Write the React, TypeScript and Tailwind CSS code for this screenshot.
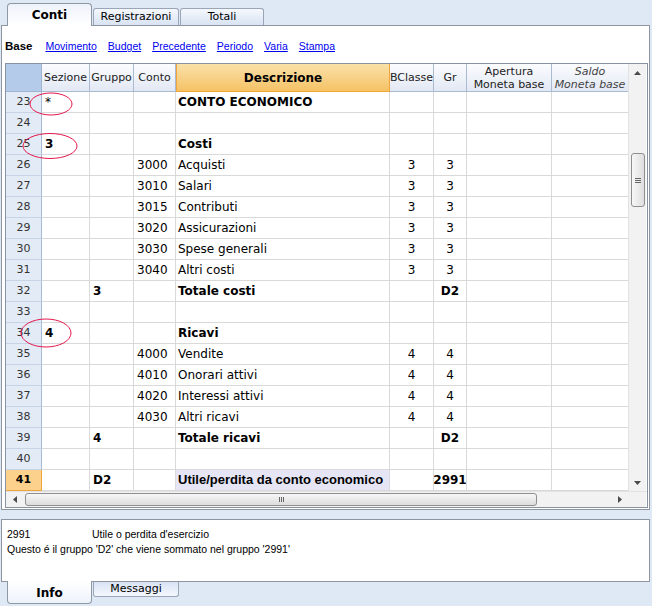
import React from 'react';

type Row = {
  n: number;
  sez?: string;
  grp?: string;
  conto?: string;
  desc?: string;
  bc?: string;
  gr?: string;
  bold?: boolean;
  big?: boolean;
  sel?: boolean;
};

const rows: Row[] = [
  { n: 23, sez: '*', desc: 'CONTO ECONOMICO', big: true },
  { n: 24 },
  { n: 25, sez: '3', desc: 'Costi', bold: true },
  { n: 26, conto: '3000', desc: 'Acquisti', bc: '3', gr: '3' },
  { n: 27, conto: '3010', desc: 'Salari', bc: '3', gr: '3' },
  { n: 28, conto: '3015', desc: 'Contributi', bc: '3', gr: '3' },
  { n: 29, conto: '3020', desc: 'Assicurazioni', bc: '3', gr: '3' },
  { n: 30, conto: '3030', desc: 'Spese generali', bc: '3', gr: '3' },
  { n: 31, conto: '3040', desc: 'Altri costi', bc: '3', gr: '3' },
  { n: 32, grp: '3', desc: 'Totale costi', gr: 'D2', bold: true },
  { n: 33 },
  { n: 34, sez: '4', desc: 'Ricavi', bold: true },
  { n: 35, conto: '4000', desc: 'Vendite', bc: '4', gr: '4' },
  { n: 36, conto: '4010', desc: 'Onorari attivi', bc: '4', gr: '4' },
  { n: 37, conto: '4020', desc: 'Interessi attivi', bc: '4', gr: '4' },
  { n: 38, conto: '4030', desc: 'Altri ricavi', bc: '4', gr: '4' },
  { n: 39, grp: '4', desc: 'Totale ricavi', gr: 'D2', bold: true },
  { n: 40 },
  { n: 41, grp: 'D2', desc: 'Utile/perdita da conto economico', gr: '2991', bold: true, sel: true },
];

const links = ['Movimento', 'Budget', 'Precedente', 'Periodo', 'Varia', 'Stampa'];

const cell = 'h-[21px] shrink-0 border-r border-b border-[#d9d9d9] flex items-center overflow-hidden whitespace-nowrap';

const Arrow = ({ dir }: { dir: 'up' | 'down' | 'left' | 'right' }) => {
  const pts = {
    up: '0,4 7,4 3.5,0',
    down: '0,0 7,0 3.5,4',
    left: '4,0 4,7 0,3.5',
    right: '0,0 0,7 4,3.5',
  }[dir];
  const vertical = dir === 'up' || dir === 'down';
  return (
    <svg width={vertical ? 7 : 4} height={vertical ? 4 : 7} viewBox={vertical ? '0 0 7 4' : '0 0 4 7'}>
      <polygon points={pts} fill="#4a4a4a" />
    </svg>
  );
};

const HeaderCell = ({ w, children, className = '' }: { w: string; children?: React.ReactNode; className?: string }) => (
  <div
    className={`${w} h-[28px] shrink-0 border-r border-b border-[#a9bad1] bg-gradient-to-b from-[#fbfcfe] to-[#e2e8f4] flex flex-col items-center justify-center text-[11px] leading-[13px] text-[#222] ${className}`}
  >
    {children}
  </div>
);

const GridRow = ({ r }: { r: Row }) => {
  const b = r.bold ? 'font-bold' : '';
  return (
    <div className="flex">
      <div
        className={`w-[36px] h-[21px] shrink-0 flex items-center justify-center text-[11px] border-r border-b ${
          r.sel
            ? 'bg-[#fcd18c] border-[#f0a43c] font-bold text-black'
            : 'bg-[#e3ebf6] border-r-[#a7bad3] border-b-[#c7d4e6] text-[#333]'
        }`}
      >
        {r.n}
      </div>
      <div className={`${cell} w-[48px] pl-[3px] ${b}`}>{r.sez}</div>
      <div className={`${cell} w-[44px] pl-[3px] ${b}`}>{r.grp}</div>
      <div className={`${cell} w-[42px] pl-[3px]`}>{r.conto}</div>
      <div
        className={`${cell} w-[214px] pl-[2px] ${b} ${r.big ? 'font-bold' : ''} ${
          r.sel ? 'bg-[#e5e5f5] font-["Liberation_Sans",sans-serif] text-[13px]' : ''
        }`}
      >
        {r.desc}
      </div>
      <div className={`${cell} w-[44px] justify-center`}>{r.bc}</div>
      <div className={`${cell} w-[33px] justify-center ${b}`}>{r.gr}</div>
      <div className={`${cell} w-[85px]`} />
      <div className={`${cell} w-[76px] border-r-0`} />
    </div>
  );
};

export default function App() {
  return (
    <div className="w-[652px] h-[606px] bg-[#dfe8f5] flex flex-col overflow-hidden font-['DejaVu_Sans',sans-serif] text-black">
      {/* top tabs */}
      <div className="h-[25px] shrink-0 flex items-end pl-[7px] gap-[1px] text-[11px]">
        <div className="relative z-10 -mb-[1px] w-[85px] h-[23px] rounded-t-[4px] border border-b-0 border-[#8e97a5] bg-gradient-to-b from-[#eef3fb] to-white flex items-center justify-center font-bold text-[12px]">
          Conti
        </div>
        <div className="w-[86px] h-[17px] rounded-t-[3px] border border-b-0 border-[#9aa6b8] bg-gradient-to-b from-[#f5f8fd] to-[#d8e3f3] flex items-center justify-center">
          Registrazioni
        </div>
        <div className="w-[84px] h-[17px] rounded-t-[3px] border border-b-0 border-[#9aa6b8] bg-gradient-to-b from-[#f5f8fd] to-[#d8e3f3] flex items-center justify-center">
          Totali
        </div>
      </div>

      {/* main panel */}
      <div className="h-[485px] shrink-0 ml-[1px] mr-[2px] border border-[#8e959f] bg-white flex flex-col">
        <div className="h-[37px] shrink-0 flex items-center pl-[3px] pt-[5px] gap-[11px] text-[10.5px] font-['Liberation_Sans',sans-serif]">
          <span className="font-bold mr-[2px] text-[11.5px]">Base</span>
          {links.map((l) => (
            <span key={l} className="text-[#0000ee] underline">
              {l}
            </span>
          ))}
        </div>

        {/* grid */}
        <div className="ml-[3px] mr-[1px] h-[445px] border border-[#8792a2] flex flex-col text-[12px]">
          <div className="flex h-[427px]">
            <div className="w-[622px] flex flex-col">
              <div className="flex">
                <div className="w-[36px] h-[28px] shrink-0 bg-[#b5cbea] border-r border-b border-[#a0b4cf]" />
                <HeaderCell w="w-[48px]">Sezione</HeaderCell>
                <HeaderCell w="w-[44px]">Gruppo</HeaderCell>
                <HeaderCell w="w-[42px]">Conto</HeaderCell>
                <div className="w-[214px] h-[28px] shrink-0 border-x border-b border-[#f0a63a] bg-gradient-to-b from-[#fae1a8] to-[#f5c264] flex items-center justify-center text-[12px] font-bold">
                  Descrizione
                </div>
                <HeaderCell w="w-[44px]">BClasse</HeaderCell>
                <HeaderCell w="w-[33px]">Gr</HeaderCell>
                <HeaderCell w="w-[85px]">
                  <span>Apertura</span>
                  <span>Moneta base</span>
                </HeaderCell>
                <HeaderCell w="w-[76px]" className="italic text-[#444] border-r-0">
                  <span>Saldo</span>
                  <span>Moneta base</span>
                </HeaderCell>
              </div>
              <div className="relative">
                {rows.map((r) => (
                  <GridRow key={r.n} r={r} />
                ))}
                <svg className="absolute left-0 top-0 pointer-events-none" width="120" height="300">
                  <ellipse cx="45" cy="12" rx="21" ry="11" fill="none" stroke="#e4194c" strokeWidth="1" />
                  <ellipse cx="44" cy="54" rx="27" ry="12.5" fill="none" stroke="#e4194c" strokeWidth="1" />
                  <ellipse cx="40" cy="241" rx="25" ry="14" fill="none" stroke="#e4194c" strokeWidth="1" />
                </svg>
              </div>
            </div>
            {/* vertical scrollbar */}
            <div className="w-[18px] bg-[#f2f2f2] border-l border-[#e2e2e2] flex flex-col items-center">
              <div className="h-[17px] flex items-center justify-center">
                <Arrow dir="up" />
              </div>
              <div className="flex-1 w-full relative">
                <div className="absolute left-[2px] right-[1px] top-[72px] h-[54px] rounded-[3px] border border-[#8f8f8f] bg-gradient-to-r from-[#f7f7f7] to-[#dedede] flex flex-col items-center justify-center gap-[1px]">
                  <div className="w-[6px] h-[1px] bg-[#666]" />
                  <div className="w-[6px] h-[1px] bg-[#666]" />
                  <div className="w-[6px] h-[1px] bg-[#666]" />
                </div>
              </div>
              <div className="h-[17px] flex items-center justify-center">
                <Arrow dir="down" />
              </div>
            </div>
          </div>
          {/* horizontal scrollbar */}
          <div className="flex h-[16px] border-t border-[#e2e2e2]">
            <div className="w-[622px] bg-[#f2f2f2] flex items-center">
              <div className="w-[17px] flex justify-center">
                <Arrow dir="left" />
              </div>
              <div className="ml-[2px] w-[512px] h-[13px] rounded-[3px] border border-[#8f8f8f] bg-gradient-to-b from-[#f7f7f7] to-[#dcdcdc] flex items-center justify-center gap-[1px]">
                <div className="w-[1px] h-[5px] bg-[#666]" />
                <div className="w-[1px] h-[5px] bg-[#666]" />
                <div className="w-[1px] h-[5px] bg-[#666]" />
              </div>
              <div className="flex-1 flex justify-end pr-[6px]">
                <Arrow dir="right" />
              </div>
            </div>
            <div className="w-[18px] bg-[#f2f2f2]" />
          </div>
        </div>
      </div>

      <div className="h-[9px] shrink-0" />

      {/* info panel */}
      <div className="h-[63px] shrink-0 ml-[1px] mr-[2px] border border-[#8e959f] bg-white pt-[7px] pl-[5px] text-[10.5px] leading-[15px] font-['Liberation_Sans',sans-serif]">
        <div className="flex">
          <span className="w-[85px]">2991</span>
          <span>Utile o perdita d'esercizio</span>
        </div>
        <div>Questo é il gruppo 'D2' che viene sommato nel gruppo '2991'</div>
      </div>

      {/* bottom tabs */}
      <div className="flex items-start pl-[7px] gap-[1px] text-[11px]">
        <div className="relative z-10 -mt-[1px] w-[85px] h-[23px] rounded-b-[4px] border border-t-0 border-[#8e97a5] bg-gradient-to-b from-white to-[#eef3fb] flex items-center justify-center pt-[2px] font-bold text-[12px]">
          Info
        </div>
        <div className="w-[86px] h-[15px] rounded-b-[3px] border border-t-0 border-[#9aa6b8] bg-gradient-to-b from-[#d8e3f3] to-[#f5f8fd] flex items-center justify-center">
          Messaggi
        </div>
      </div>
    </div>
  );
}
